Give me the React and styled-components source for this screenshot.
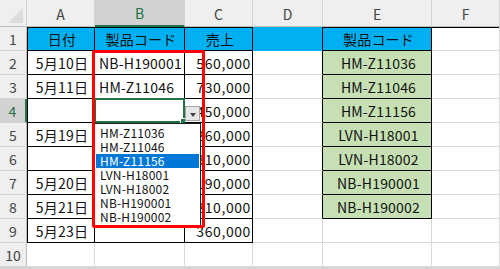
import React from "react";
import styled, { createGlobalStyle } from "styled-components";

const GlobalStyle = createGlobalStyle`
  html, body {
    margin: 0;
    padding: 0;
    background: #ffffff;
  }
  body {
    font-family: "Noto Sans CJK JP", "Noto Sans", sans-serif;
  }
`;

const GRID = "#dadada";
const BLACK = "#000000";
const GREEN = "#217346";
const BLUE = "#00b0f0";
const MINT = "#c6e0b4";

const Sheet = styled.div`
  position: relative;
  width: 500px;
  height: 269px;
  overflow: hidden;
  display: grid;
  grid-template-columns: 27px 68px 90px 68px 70px 109px 68px;
  grid-template-rows: 27px repeat(10, 24px);
  border-bottom: 2px solid #d4d4d4;
  box-sizing: border-box;
  font-size: 14px;
  color: #111;
`;

const Corner = styled.div`
  position: relative;
  background: #efefef;
  border-right: 1px solid #cfcfcf;
  border-bottom: 1px solid #bdbdbd;
  box-sizing: border-box;

  &::after {
    content: "";
    position: absolute;
    right: 3px;
    bottom: 3px;
    width: 0;
    height: 0;
    border-left: 15px solid transparent;
    border-bottom: 15px solid #dcdcdc;
  }
`;

const ColHead = styled.div`
  display: flex;
  align-items: center;
  justify-content: center;
  box-sizing: border-box;
  background: ${(p) => (p.$active ? "#d2d2d2" : "#efefef")};
  color: ${(p) => (p.$active ? GREEN : "#444")};
  border-right: 1px solid #d4d4d4;
  border-bottom: ${(p) => (p.$active ? `2px solid ${GREEN}` : "1px solid #bdbdbd")};
  font-size: 14px;
  padding-top: 1px;
`;

const RowHead = styled.div`
  display: flex;
  align-items: center;
  justify-content: center;
  box-sizing: border-box;
  background: ${(p) => (p.$active ? "#d2d2d2" : "#efefef")};
  color: ${(p) => (p.$active ? GREEN : "#444")};
  border-right: ${(p) => (p.$active ? `2px solid ${GREEN}` : "1px solid #bdbdbd")};
  border-bottom: 1px solid #d4d4d4;
  font-size: 14px;
`;

const Cell = styled.div`
  position: relative;
  display: flex;
  align-items: center;
  justify-content: ${(p) => p.$align};
  box-sizing: border-box;
  padding: 1px 1px 0 4px;
  background: ${(p) => p.$bg || "#ffffff"};
  border-right: 1px solid ${(p) => p.$r};
  border-bottom: 1px solid ${(p) => p.$b};
  box-shadow: ${(p) => p.$shadow || "none"};
  white-space: nowrap;
  letter-spacing: ${(p) => (p.$align === "flex-end" ? "0.6px" : "0.2px")};
`;

const Selection = styled.div`
  position: absolute;
  left: -1px;
  top: -1px;
  right: -1px;
  bottom: -1px;
  border: 2px solid ${GREEN};
  pointer-events: none;

  &::after {
    content: "";
    position: absolute;
    right: -4px;
    bottom: -4px;
    width: 5px;
    height: 5px;
    background: ${GREEN};
    border: 1px solid #fff;
  }
`;

const DropButton = styled.div`
  position: absolute;
  left: calc(100% + 1px);
  top: 7px;
  width: 15px;
  height: 15px;
  box-sizing: border-box;
  background: #e6e6e6;
  border: 1px solid #a6a6a6;
  display: flex;
  align-items: center;
  justify-content: center;
  z-index: 3;

  &::before {
    content: "";
    width: 0;
    height: 0;
    margin-top: 2px;
    border-left: 3.5px solid transparent;
    border-right: 3.5px solid transparent;
    border-top: 4px solid #444;
  }
`;

const DropList = styled.div`
  position: absolute;
  left: -1px;
  top: calc(100% + 1px);
  width: 107px;
  box-sizing: border-box;
  padding: 2px 1px 1px;
  background: #ffffff;
  border: 1px solid #222;
  z-index: 3;
`;

const DropItem = styled.div`
  height: 14px;
  line-height: 14px;
  padding-left: 4px;
  font-size: 12px;
  color: ${(p) => (p.$on ? "#ffffff" : "#111")};
  background: ${(p) => (p.$on ? "#0078d7" : "transparent")};
`;

const Callout = styled.div`
  position: absolute;
  left: 92px;
  top: 50px;
  width: 113px;
  height: 178px;
  box-sizing: border-box;
  border: 3px solid #ff0000;
  border-radius: 2px;
  z-index: 4;
  pointer-events: none;
`;

const columns = ["A", "B", "C", "D", "E", "F"];

const rows = [
  ["日付", "製品コード", "売上", "", "製品コード", ""],
  ["5月10日", "NB-H190001", "560,000", "", "HM-Z11036", ""],
  ["5月11日", "HM-Z11046", "730,000", "", "HM-Z11046", ""],
  ["", "", "450,000", "", "HM-Z11156", ""],
  ["5月19日", "", "260,000", "", "LVN-H18001", ""],
  ["", "", "310,000", "", "LVN-H18002", ""],
  ["5月20日", "", "190,000", "", "NB-H190001", ""],
  ["5月21日", "", "210,000", "", "NB-H190002", ""],
  ["5月23日", "", "360,000", "", "", ""],
  ["", "", "", "", "", ""],
];

const listItems = [
  "HM-Z11036",
  "HM-Z11046",
  "HM-Z11156",
  "LVN-H18001",
  "LVN-H18002",
  "NB-H190001",
  "NB-H190002",
];

const inTable = (r, c) => r <= 8 && c <= 2;
const inCodes = (r, c) => r <= 7 && c === 4;

function cellProps(r, c) {
  const table = inTable(r, c) || inCodes(r, c);
  let bg;
  if (r === 0 && c <= 4) bg = BLUE;
  else if (c === 4 && r <= 7) bg = MINT;

  let right = table ? BLACK : GRID;
  if (c === 3 && r <= 7) right = BLACK;
  let bottom = table ? BLACK : GRID;
  if (c === 3 && r === 0) bottom = BLUE;

  const shadows = [];
  if (c === 0 && r <= 8) shadows.push(`inset 1px 0 0 ${BLACK}`);
  if (r === 0 && c !== 3) shadows.push(`inset 0 1px 0 ${BLACK}`);

  let align = "center";
  if (c === 1 && r > 0) align = "flex-start";
  if (c === 2 && r > 0) align = "flex-end";

  return {
    $bg: bg,
    $r: right,
    $b: bottom,
    $shadow: shadows.length ? shadows.join(", ") : undefined,
    $align: align,
  };
}

const App = () => {
  return (
    <>
      <GlobalStyle />
      <Sheet>
        <Corner />
        {columns.map((col) => (
          <ColHead key={col} $active={col === "B"}>
            {col}
          </ColHead>
        ))}
        {rows.map((row, r) => (
          <React.Fragment key={r}>
            <RowHead $active={r === 3}>{r + 1}</RowHead>
            {row.map((text, c) => (
              <Cell key={c} {...cellProps(r, c)}>
                {text}
                {r === 3 && c === 1 && (
                  <>
                    <Selection />
                    <DropButton />
                    <DropList>
                      {listItems.map((item) => (
                        <DropItem key={item} $on={item === "HM-Z11156"}>
                          {item}
                        </DropItem>
                      ))}
                    </DropList>
                  </>
                )}
              </Cell>
            ))}
          </React.Fragment>
        ))}
        <Callout />
      </Sheet>
    </>
  );
};

export default App;
